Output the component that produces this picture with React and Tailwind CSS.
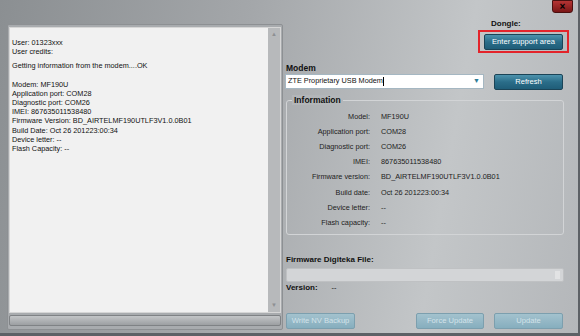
import React from 'react'

const logLines = [
  ['User: 01323xxx', 'User credits:'],
  ['Getting information from the modem....OK'],
  [
    'Modem: MF190U',
    'Application port: COM28',
    'Diagnostic port: COM26',
    'IMEI: 867635011538480',
    'Firmware Version: BD_AIRTELMF190UTLF3V1.0.0B01',
    'Build Date: Oct 26 201223:00:34',
    'Device letter: --',
    'Flash Capacity: --',
  ],
]

const info = [
  ['Model:', 'MF190U'],
  ['Application port:', 'COM28'],
  ['Diagnostic port:', 'COM26'],
  ['IMEI:', '867635011538480'],
  ['Firmware version:', 'BD_AIRTELMF190UTLF3V1.0.0B01'],
  ['Build date:', 'Oct 26 201223:00:34'],
  ['Device letter:', '--'],
  ['Flash capacity:', '--'],
]

function TealButton({ children, disabled, className = '' }) {
  return (
    <div
      className={`h-[16px] flex items-center justify-center rounded-[2px] border text-[7.6px] ${
        disabled
          ? 'border-[#7c9fae] bg-[linear-gradient(#a3c2ce,#86aebe)] text-[#d3e3ea]'
          : 'border-[#1b4457] bg-[linear-gradient(#4d93ad,#2a6d89_50%,#1f5d78)] text-white'
      } ${className}`}
    >
      {children}
    </div>
  )
}

export default function App() {
  return (
    <div
      className="relative w-[580px] h-[336px] overflow-hidden border-r-[2px] border-b-[3px] border-[#5d6166] bg-[linear-gradient(100deg,#8b8f92_0%,#a4a7aa_40%,#c3c6c8_75%,#b4b7ba_100%)] flex"
      style={{ fontFamily: '"Liberation Sans", Arial, sans-serif' }}
    >
      <div className="absolute right-[5px] top-0 w-[21px] h-[13px] rounded-b-[3px] border border-[#4a1010] bg-[linear-gradient(#b53434,#7a1616)] flex items-center justify-center text-[10px] font-bold leading-none text-black">
        ×
      </div>

      {/* left: log panel */}
      <div className="ml-[7px] mt-[24px] w-[276px] h-[306px] rounded-[2px] border border-[#8d9093] bg-[#a8abae] px-[1px] pt-[2px] flex flex-col">
        <div className="h-[286px] flex bg-[#f1f1f1] border border-[#d6d6d6]">
          <div className="flex-1 pl-[2px] pt-[10px] text-[7.3px] leading-[9.2px] text-[#111]">
            {logLines.map((group, i) => (
              <div key={i} className={i === 0 ? '' : i === 1 ? 'mt-[5px]' : 'mt-[9px]'}>
                {group.map(l => (
                  <div key={l} className="whitespace-nowrap">{l}</div>
                ))}
              </div>
            ))}
          </div>
          <div className="w-[12px] bg-[#b7b9bb] flex flex-col justify-between items-center py-[2px] text-[6px] text-[#8e9093]">
            <span>▲</span>
            <span>▼</span>
          </div>
        </div>
        <div className="mt-[2px] h-[11px] rounded-[2px] border border-[#7f8285] bg-[linear-gradient(#c3c5c7,#9c9fa2)]" />
      </div>

      {/* right: controls */}
      <div className="ml-[3px] w-[278px] flex flex-col text-[7.3px] text-[#111]">
        <div className="self-end mr-[-5px] mt-[19px] flex flex-col">
          <div className="ml-[13px] font-bold text-[8px] leading-[10px]">Dongle:</div>
          <div className="mt-[1px] w-[91px] h-[23px] border-[2px] border-[#e3242b] flex items-center justify-center">
            <TealButton className="w-[79px]">Enter support area</TealButton>
          </div>
        </div>

        <div className="mt-[10px] font-bold text-[8.5px] leading-[10px]">Modem</div>
        <div className="mt-[1px] flex items-start">
          <div className="w-[199px] h-[15px] ml-[-1px] bg-white border border-[#a5b7c2] flex items-center pl-[2px] pr-[3px]">
            <span className="flex-1">
              ZTE Proprietary USB Modem<span className="inline-block w-px h-[9px] bg-black align-middle" />
            </span>
            <span className="text-[7px] text-[#2f7c98]">▼</span>
          </div>
          <TealButton className="ml-[10px] w-[69px]">Refresh</TealButton>
        </div>

        <div className="relative mt-[10px] h-[135px] rounded-[3px] border border-[#d2d4d6] pt-[9px]">
          <div className="absolute left-[5px] top-[-6px] px-[2px] bg-[#b3b6b9] font-bold text-[8.5px] leading-[10px]">
            Information
          </div>
          {info.map(([k, v]) => (
            <div key={k} className="flex h-[15.1px] items-center text-[#222]">
              <div className="w-[83px] text-right">{k}</div>
              <div className="ml-[11px]">{v}</div>
            </div>
          ))}
        </div>

        <div className="mt-[20px] font-bold text-[8px] leading-[10px]">Firmware Digiteka File:</div>
        <div className="mt-[3px] h-[14px] rounded-[2px] border border-[#bfc1c3] bg-[#d3d5d7] flex justify-end items-center pr-[3px]">
          <div className="w-[5px] h-[8px] bg-[#e2e3e4]" />
        </div>
        <div className="mt-[1px] flex leading-[10px]">
          <span className="font-bold text-[8px]">Version:</span>
          <span className="ml-[14px]">--</span>
        </div>

        <div className="mt-[20px] flex">
          <TealButton disabled className="w-[69px]">Write NV Backup</TealButton>
          <TealButton disabled className="ml-[61px] w-[68px]">Force Update</TealButton>
          <TealButton disabled className="ml-[10px] w-[69px]">Update</TealButton>
        </div>
      </div>
    </div>
  )
}
